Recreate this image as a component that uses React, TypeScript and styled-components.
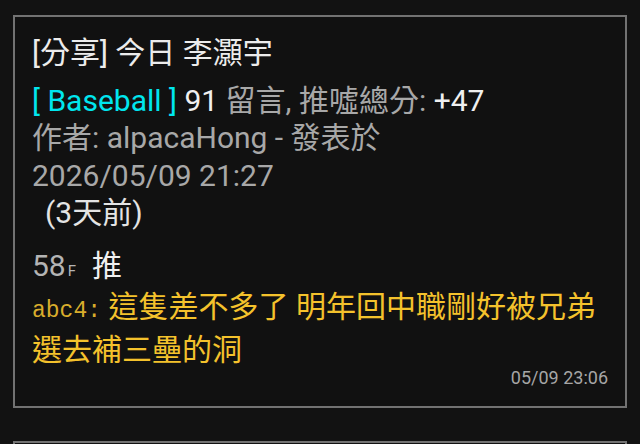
import React from 'react';
import styled, { createGlobalStyle } from 'styled-components';

const GlobalStyle = createGlobalStyle`
  html, body {
    margin: 0;
    padding: 0;
    background: #121212;
    overflow: hidden;
  }
  body {
    font-family: Roboto, "Noto Sans CJK TC", sans-serif;
  }
`;

const Page = styled.div`
  padding: 15px 13px 0;
  display: flex;
  flex-direction: column;
  gap: 33px;
`;

const Card = styled.div`
  border: 2px solid #727272;
  background: #111111;
  padding: 17px 17px 18px 17px;
  font-size: 30px;
  line-height: 37.5px;
  color: #e8e8e8;
`;

const Title = styled.div`
  color: #ececec;
  margin-bottom: 10px;
`;

const Line = styled.div<{ $color?: string; $indent?: number }>`
  color: ${p => p.$color || '#a8a8a8'};
  padding-left: ${p => p.$indent || 0}px;
`;

const Board = styled.span`
  color: #00e6ee;
`;

const Strong = styled.span`
  color: #f0f0f0;
`;

const Muted = styled.span`
  color: #a8a8a8;
`;

const Push = styled.div`
  margin-top: 15px;
  display: flex;
  align-items: baseline;
  gap: 16px;
`;

const Floor = styled.span`
  color: #b4b4b4;
`;

const FloorMark = styled.span`
  font-size: 15px;
  margin-left: 2px;
`;

const Tag = styled.span`
  color: #f0f0f0;
`;

const Comment = styled.div`
  color: #f4c22c;
  margin-top: -2px;
`;

const User = styled.span`
  font-family: "Liberation Mono", monospace;
  font-size: 23px;
  color: #d9ad2c;
`;

const Time = styled.div`
  text-align: right;
  font-size: 18px;
  line-height: 20px;
  color: #a6a6a6;
  margin-top: 0;
`;

const Spacer = styled.div`
  height: 60px;
`;

export default function App() {
  return (
    <>
      <GlobalStyle />
      <Page>
        <Card>
          <Title>[分享] 今日 李灝宇</Title>
          <Line>
            <Board>[ Baseball ]</Board> <Strong>91</Strong> <Muted>留言, 推噓總分:</Muted>{' '}
            <Strong>+47</Strong>
          </Line>
          <Line>作者: alpacaHong - 發表於</Line>
          <Line>2026/05/09 21:27</Line>
          <Line $color="#e4e4e4" $indent={13}>(3天前)</Line>
          <Push>
            <Floor>
              58<FloorMark>F</FloorMark>
            </Floor>
            <Tag>推</Tag>
          </Push>
          <Comment>
            <User>abc4:</User> 這隻差不多了 明年回中職剛好被兄弟選去補三壘的洞
          </Comment>
          <Time>05/09 23:06</Time>
        </Card>
        <Card>
          <Spacer />
        </Card>
      </Page>
    </>
  );
}
